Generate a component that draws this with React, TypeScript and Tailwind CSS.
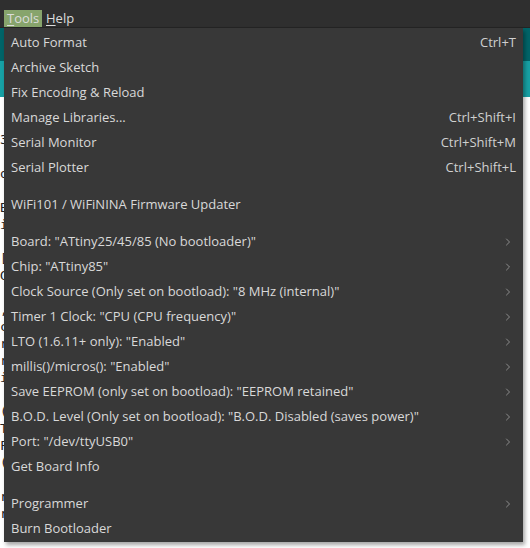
import { ChevronRight } from "lucide-react";

type Item =
  | { kind: "item"; label: string; shortcut?: string; sub?: boolean }
  | { kind: "sep" };

const items: Item[] = [
  { kind: "item", label: "Auto Format", shortcut: "Ctrl+T" },
  { kind: "item", label: "Archive Sketch" },
  { kind: "item", label: "Fix Encoding & Reload" },
  { kind: "item", label: "Manage Libraries...", shortcut: "Ctrl+Shift+I" },
  { kind: "item", label: "Serial Monitor", shortcut: "Ctrl+Shift+M" },
  { kind: "item", label: "Serial Plotter", shortcut: "Ctrl+Shift+L" },
  { kind: "sep" },
  { kind: "item", label: "WiFi101 / WiFiNINA Firmware Updater" },
  { kind: "sep" },
  { kind: "item", label: 'Board: "ATtiny25/45/85 (No bootloader)"', sub: true },
  { kind: "item", label: 'Chip: "ATtiny85"', sub: true },
  { kind: "item", label: 'Clock Source (Only set on bootload): "8 MHz (internal)"', sub: true },
  { kind: "item", label: 'Timer 1 Clock: "CPU (CPU frequency)"', sub: true },
  { kind: "item", label: 'LTO (1.6.11+ only): "Enabled"', sub: true },
  { kind: "item", label: 'millis()/micros(): "Enabled"', sub: true },
  { kind: "item", label: 'Save EEPROM (only set on bootload): "EEPROM retained"', sub: true },
  { kind: "item", label: 'B.O.D. Level (Only set on bootload): "B.O.D. Disabled (saves power)"', sub: true },
  { kind: "item", label: 'Port: "/dev/ttyUSB0"', sub: true },
  { kind: "item", label: "Get Board Info" },
  { kind: "sep" },
  { kind: "item", label: "Programmer", sub: true },
  { kind: "item", label: "Burn Bootloader" },
];

const codeLines = [
  "", "", "3", "", "o", "", "B", "i", "", "[", "G", "", ",", "c", "r", "r", "i", "", "(",
  "T", "F", "(", "", "r", "r", "", "", "",
];

export default function App() {
  return (
    <div
      className="relative w-[530px] h-[548px] overflow-hidden bg-white text-[13px]"
      style={{ fontFamily: '"Open Sans", "Noto Sans", sans-serif' }}
    >
      {/* menubar */}
      <div className="h-[28px] bg-[#2f2f2f] flex items-end gap-[4px] px-[4px] border-b border-[#242424] text-[#dcdcdc]">
        <div className="h-[17px] w-[38px] px-[3px] bg-[#87a46c] flex items-center leading-none">
          <span className="underline underline-offset-2">T</span>ools
        </div>
        <div className="h-[17px] flex items-center leading-none">
          <span className="underline underline-offset-2">H</span>elp
        </div>
      </div>
      {/* toolbars behind */}
      <div className="h-[33px] bg-[#006468]" />
      <div className="h-[36px] bg-[#17a1a5]" />
      {/* editor behind */}
      <div className="flex flex-col text-[#222] leading-[17px]" style={{ fontFamily: '"DejaVu Sans Mono", monospace' }}>
        {codeLines.map((c, i) => (
          <div key={i} className="h-[17px]">{c}</div>
        ))}
      </div>

      {/* tools dropdown */}
      <div className="absolute left-[4px] top-[28px] w-[519px] bg-[#383838] text-[#d9d9d9] pt-[2px] pb-[1px] shadow-[2px_3px_4px_rgba(0,0,0,0.35)]">
        {items.map((it, i) =>
          it.kind === "sep" ? (
            <div key={i} className="h-[12px]" />
          ) : (
            <div key={i} className="h-[25px] flex items-center justify-between pl-[7px] pr-[7px]">
              <span className="whitespace-nowrap">{it.label}</span>
              {it.shortcut && <span className="text-[#d0d0d0]">{it.shortcut}</span>}
              {it.sub && <ChevronRight className="w-[12px] h-[12px] text-[#8c8c8c] mr-[2px]" strokeWidth={2} />}
            </div>
          )
        )}
      </div>
    </div>
  );
}
